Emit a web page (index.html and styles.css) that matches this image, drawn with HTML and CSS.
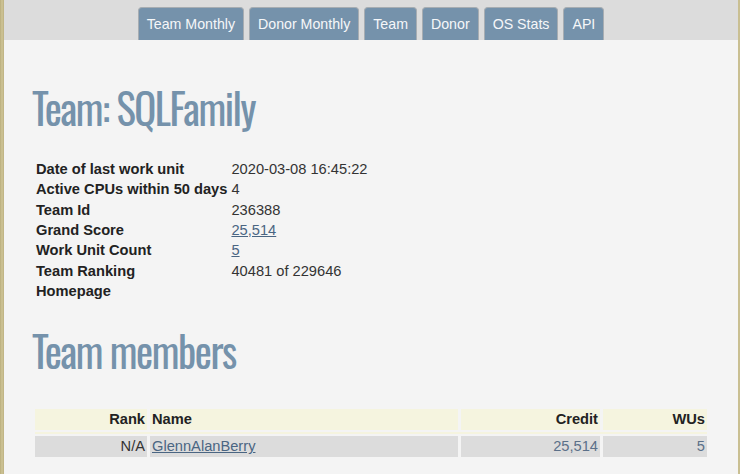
FILE: index.html
```html
<!DOCTYPE html>
<html>
<head>
<meta charset="utf-8">
<title>Team: SQLFamily</title>
<link rel="stylesheet" href="styles.css">
</head>
<body>
<div class="page">
  <nav class="nav">
    <a class="tab" href="#">Team Monthly</a>
    <a class="tab" href="#">Donor Monthly</a>
    <a class="tab" href="#">Team</a>
    <a class="tab" href="#">Donor</a>
    <a class="tab" href="#">OS Stats</a>
    <a class="tab" href="#">API</a>
  </nav>
  <main class="main">
    <h1 class="title">Team: SQLFamily</h1>
    <table class="info">
      <tr><th>Date of last work unit</th><td>2020-03-08 16:45:22</td></tr>
      <tr><th>Active CPUs within 50 days</th><td>4</td></tr>
      <tr><th>Team Id</th><td>236388</td></tr>
      <tr><th>Grand Score</th><td><a href="#">25,514</a></td></tr>
      <tr><th>Work Unit Count</th><td><a href="#">5</a></td></tr>
      <tr><th>Team Ranking</th><td>40481 of 229646</td></tr>
      <tr><th>Homepage</th><td></td></tr>
    </table>
    <h2 class="title members-title">Team members</h2>
    <table class="members">
      <thead>
        <tr>
          <th class="c-rank">Rank</th>
          <th class="c-name">Name</th>
          <th class="c-credit">Credit</th>
          <th class="c-wus">WUs</th>
        </tr>
        <tr class="sep"><td colspan="4"></td></tr>
      </thead>
      <tbody>
        <tr>
          <td class="c-rank">N/A</td>
          <td class="c-name"><a href="#">GlennAlanBerry</a></td>
          <td class="c-credit num">25,514</td>
          <td class="c-wus num">5</td>
        </tr>
      </tbody>
    </table>
  </main>
</div>
</body>
</html>
```
FILE: styles.css
```css
html, body {
  margin: 0;
  padding: 0;
}
body {
  background: linear-gradient(90deg, #b9ad7c 0, #cfc597 2px, #bcb080 4px, #c9bf92 100%);
  font-family: "Liberation Sans", Arial, sans-serif;
  font-size: 14.667px;
  color: #333;
  height: 474px;
  overflow: hidden;
}
.page {
  margin: 0 2px 0 4px;
  background: #f4f4f4;
  min-height: 474px;
}
.nav {
  height: 40px;
  background: #dcdcdc;
  display: flex;
  justify-content: center;
  align-items: flex-end;
  gap: 5px;
}
.tab {
  height: 32px;
  line-height: 32px;
  padding: 0 8px;
  background: #7592ab;
  color: #f5f7f9;
  text-decoration: none;
  border: 1px solid #a7adb2;
  border-bottom: none;
  border-radius: 4px 4px 0 0;
  font-size: 14.2px;
}
.main {
  padding: 40px 28px 20px 28px;
}
.title {
  font-family: "Oswald", "Liberation Sans Narrow", "DejaVu Sans Condensed", sans-serif;
  font-weight: normal;
  color: #7592ab;
  font-size: 42px;
  line-height: 54px;
  letter-spacing: -1.5px;
  margin: 0;
  transform: scaleX(0.97);
  transform-origin: left center;
}
.info {
  border-spacing: 2px;
  margin: 24px 0 0 0;
}
.info th, .info td {
  padding: 1px 2px;
  line-height: 16.33px;
  text-align: left;
  vertical-align: top;
}
.info th {
  font-weight: bold;
  color: #222;
}
.info td {
  padding-left: 0;
}
a {
  color: #4a6582;
}
.members-title {
  margin-top: 21px;
}
.members {
  width: 100%;
  border-spacing: 3px 2px;
  margin-top: 30px;
}
.members th, .members td {
  padding: 2px 2px;
  line-height: 17px;
}
.members thead th {
  background: #f5f4df;
  color: #222;
  font-weight: bold;
  text-align: left;
}
.members tbody td {
  background: #dcdcdc;
}
.members .sep td {
  background: #f5f4df;
  height: 2px;
  padding: 0;
  line-height: 0;
}
.members .c-rank {
  width: 108px;
  text-align: right;
}
.members th.c-rank {
  text-align: right;
}
.members .c-credit {
  width: 135px;
}
.members .c-wus {
  width: 100px;
}
.members th.c-credit, .members th.c-wus, .members .num {
  text-align: right;
}
.members .num {
  color: #5b7089;
}
```
